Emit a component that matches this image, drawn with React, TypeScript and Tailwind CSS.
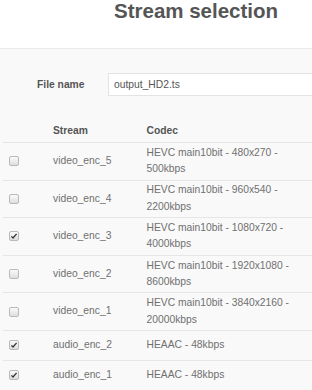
import React from 'react';

type Stream = { name: string; codec: string; checked: boolean };

const streams: Stream[] = [
  { name: 'video_enc_5', codec: 'HEVC main10bit - 480x270 - 500kbps', checked: false },
  { name: 'video_enc_4', codec: 'HEVC main10bit - 960x540 - 2200kbps', checked: false },
  { name: 'video_enc_3', codec: 'HEVC main10bit - 1080x720 - 4000kbps', checked: true },
  { name: 'video_enc_2', codec: 'HEVC main10bit - 1920x1080 - 8600kbps', checked: false },
  { name: 'video_enc_1', codec: 'HEVC main10bit - 3840x2160 - 20000kbps', checked: false },
  { name: 'audio_enc_2', codec: 'HEAAC - 48kbps', checked: true },
  { name: 'audio_enc_1', codec: 'HEAAC - 48kbps', checked: true },
];

function Checkbox({ checked }: { checked: boolean }) {
  return (
    <span className="inline-flex w-[10px] h-[10px] items-center justify-center rounded-[2px] border border-[#b9b9b9] bg-gradient-to-b from-[#fbfbfb] to-[#dedede]">
      {checked && (
        <svg width="8" height="8" viewBox="0 0 8 8">
          <path d="M1.4 4.4 L3 6 L6.6 1.8" fill="none" stroke="#333" strokeWidth="1.3" />
        </svg>
      )}
    </span>
  );
}

export default function App() {
  return (
    <div className="w-[312px] h-[390px] overflow-hidden bg-[#f9f9f9] text-[10.3px] text-[#707070] font-['Liberation_Sans',Arial,sans-serif]">
      <div className="h-[49px] bg-white border-b border-[#ebebeb] pt-[1px] pl-[114px]">
        <h1 className="text-[20.5px] leading-none font-bold text-[#555] whitespace-nowrap">Stream selection</h1>
      </div>

      <div className="flex items-center mt-[24px] -mr-[20px]">
        <label className="w-[108px] pl-[37px] font-bold text-[#555]">File name</label>
        <div className="flex-1 h-[22.5px] flex items-center bg-white border border-[#e3e3e3] pl-[5px] text-[#555]">
          output_HD2.ts
        </div>
      </div>

      <div className="mt-[27px] ml-[3px]">
        <div className="flex pb-[3px] leading-[16.5px] font-bold text-[#555]">
          <div className="w-[50px]" />
          <div className="w-[93.5px]">Stream</div>
          <div>Codec</div>
        </div>
        {streams.map((s) => (
          <div key={s.name} className="flex items-center min-h-[30px] border-t border-[#e6e6e6] leading-[16.5px]">
            <div className="w-[50px] pl-[6px] flex items-center">
              <Checkbox checked={s.checked} />
            </div>
            <div className="w-[93.5px]">{s.name}</div>
            <div className="w-[158px] py-[1.8px]">{s.codec}</div>
          </div>
        ))}
      </div>
    </div>
  );
}
